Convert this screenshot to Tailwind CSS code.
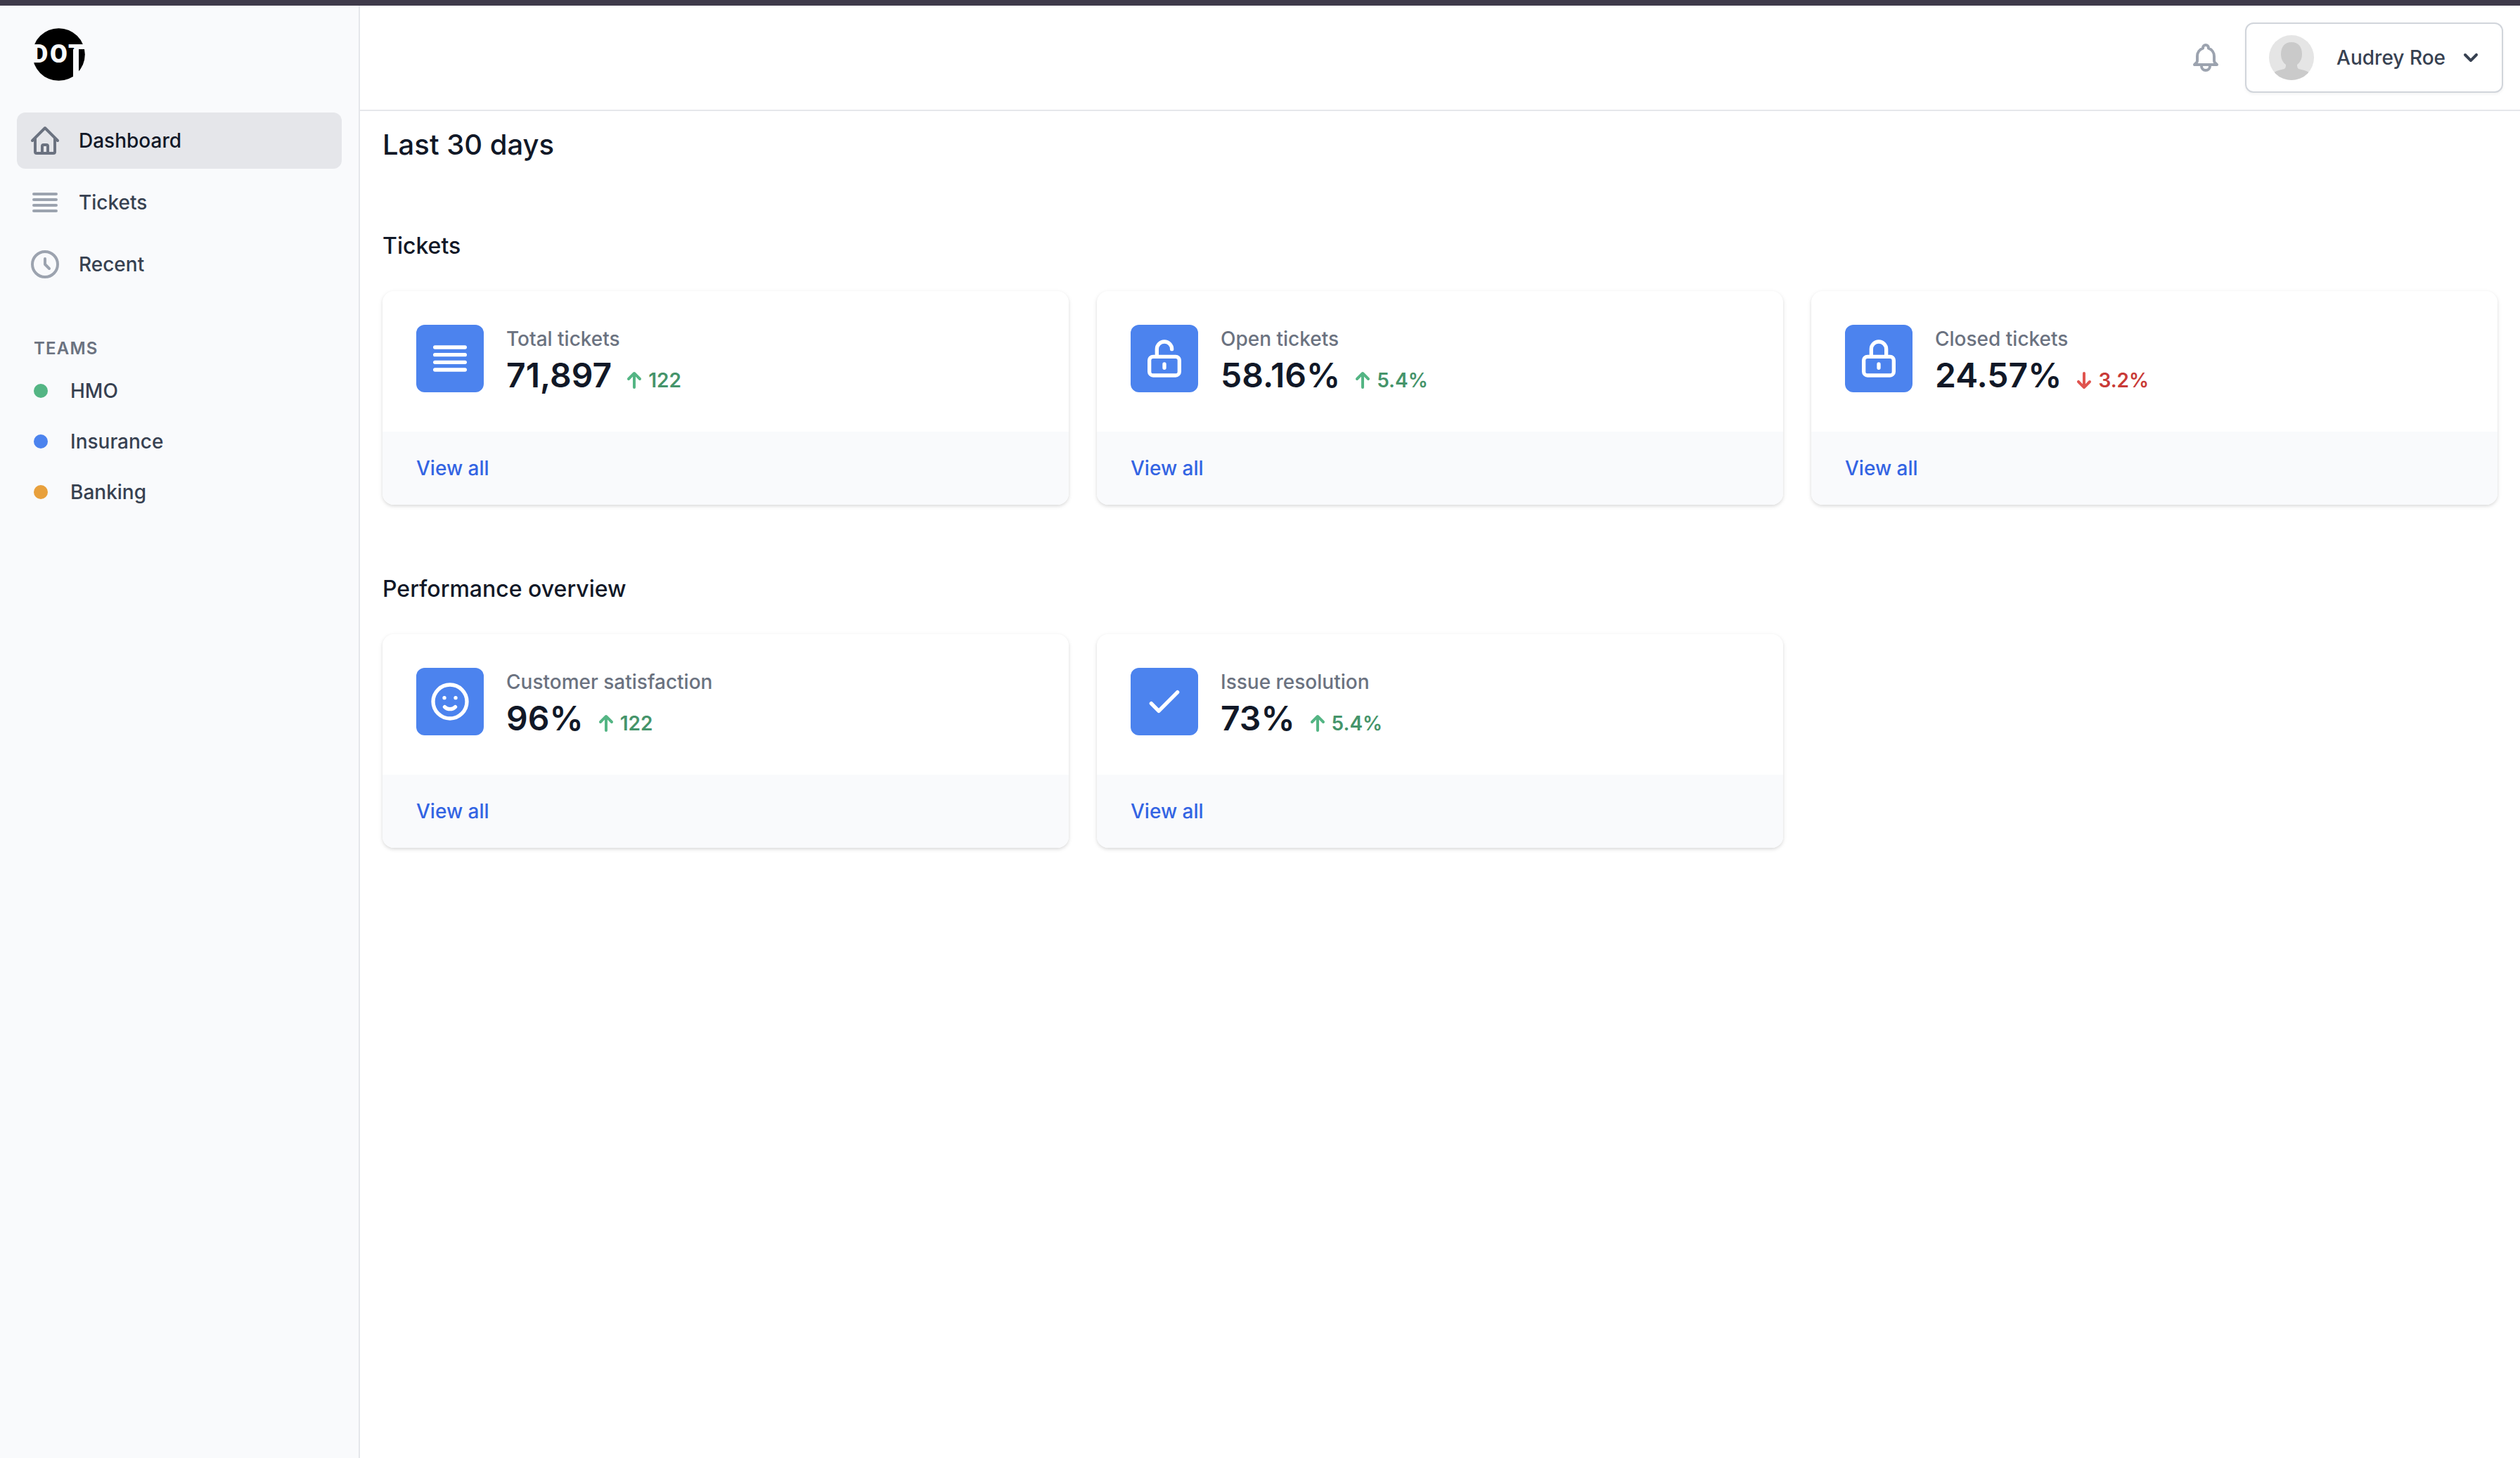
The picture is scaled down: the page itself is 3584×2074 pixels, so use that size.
<!DOCTYPE html>
<html lang="en">
<head>
<meta charset="utf-8">
<meta name="viewport" content="width=device-width, initial-scale=1">
<title>Dashboard</title>
<script src="https://cdn.jsdelivr.net/npm/@tailwindcss/browser@4"></script>
</head>
<body class="flex min-h-screen flex-col border-t-8 border-[#3f3a4a] bg-white font-['Inter',sans-serif] text-[28px] leading-10 font-medium text-[#111827]">
<div class="flex grow">
  <aside class="w-[512px] shrink-0 border-r-2 border-[#e5e7eb] bg-[#f9fafc] px-6 pt-8">
    <a href="#" aria-label="DOT home" class="block pl-[21px]">
      <svg class="h-[76px] w-[76px]" viewBox="0 0 76 76" aria-hidden="true">
        <circle cx="38.5" cy="37.5" r="37.3" fill="#000"/>
        <text y="49" x="0 26 52" font-family="Roboto, sans-serif" font-weight="900" font-size="36" fill="#f9fafc">DOT</text>
        <path d="M0 23h4v26H0zM66 23h10v7H66zM59 30h8v46h-8z" fill="#f9fafc"/>
      </svg>
    </a>
    <nav class="mt-11 flex flex-col gap-2 text-[#374151]">
      <a href="#" aria-current="page" class="flex items-center gap-6 rounded-xl bg-[#e5e6ea] px-4 py-4 text-[#111827]">
        <svg class="size-12 text-[#6b7280]" fill="none" viewBox="0 0 24 24" stroke="currentColor" stroke-width="2" stroke-linecap="round" stroke-linejoin="round" aria-hidden="true"><path d="M3 12l2-2m0 0l7-7 7 7M5 10v10a1 1 0 001 1h3m10-11l2 2m-2-2v10a1 1 0 01-1 1h-3m-6 0a1 1 0 001-1v-4a1 1 0 011-1h2a1 1 0 011 1v4a1 1 0 001 1m-6 0h6"/></svg>
        Dashboard
      </a>
      <a href="#" class="flex items-center gap-6 rounded-xl px-4 py-4">
        <svg class="size-12 text-[#9ca3af]" fill="none" viewBox="0 0 24 24" stroke="currentColor" stroke-width="2" stroke-linecap="round" stroke-linejoin="round" aria-hidden="true"><path d="M4 6h16M4 10h16M4 14h16M4 18h16"/></svg>
        Tickets
      </a>
      <a href="#" class="flex items-center gap-6 rounded-xl px-4 py-4">
        <svg class="size-12 text-[#9ca3af]" fill="none" viewBox="0 0 24 24" stroke="currentColor" stroke-width="2" stroke-linecap="round" stroke-linejoin="round" aria-hidden="true"><path d="M12 8v4l3 3m6-3a9 9 0 11-18 0 9 9 0 0118 0z"/></svg>
        Recent
      </a>
    </nav>
    <h3 id="teams" class="mt-16 px-6 text-2xl leading-8 font-semibold tracking-wider text-[#6b7280] uppercase">Teams</h3>
    <div role="group" aria-labelledby="teams" class="mt-2 flex flex-col text-[#374151]">
      <a href="#" class="flex items-center gap-8 px-6 py-4"><span class="size-5 rounded-full bg-[#54b584]"></span>HMO</a>
      <a href="#" class="flex items-center gap-8 px-6 py-4"><span class="size-5 rounded-full bg-[#4c83ee]"></span>Insurance</a>
      <a href="#" class="flex items-center gap-8 px-6 py-4"><span class="size-5 rounded-full bg-[#e8a03c]"></span>Banking</a>
    </div>
  </aside>

  <div class="min-w-0 grow">
    <header class="flex items-center justify-end gap-8 border-b-2 border-[#e5e7eb] px-6 py-6">
      <button type="button" aria-label="View notifications" class="text-[#9ca3af]">
        <svg class="size-12" fill="none" viewBox="0 0 24 24" stroke="currentColor" stroke-width="2" stroke-linecap="round" stroke-linejoin="round" aria-hidden="true"><path d="M15 17h5l-1.405-1.405A2.032 2.032 0 0118 14.158V11a6.002 6.002 0 00-4-5.659V5a2 2 0 10-4 0v.341C7.67 6.165 6 8.388 6 11v3.159c0 .538-.214 1.055-.595 1.436L4 17h5m6 0v1a3 3 0 11-6 0v-1m6 0H9"/></svg>
      </button>
      <button type="button" aria-haspopup="menu" class="flex items-center rounded-xl border-2 border-[#d1d5db] bg-white py-4 pr-6 pl-8 text-[#374151] shadow-[0_2px_4px_rgba(0,0,0,0.05)]">
        <svg class="size-16 rounded-full" viewBox="0 0 64 64" aria-hidden="true">
          <path fill="#e5e5e5" d="M0 0h64v64H0z"/>
          <path fill="#cacaca" d="M32 10c10 0 15 7 15 17 0 7-3 12-7 15 0 5 1 6 6 7 6 1 10 3 13 6v9H5v-9c3-3 7-5 13-6 5-1 6-2 6-7-4-3-7-8-7-15 0-10 5-17 15-17z"/>
        </svg>
        <span class="ml-8">Audrey Roe</span>
        <svg class="ml-4 size-10" viewBox="0 0 20 20" fill="currentColor" aria-hidden="true"><path fill-rule="evenodd" clip-rule="evenodd" d="M5.293 7.293a1 1 0 011.414 0L10 10.586l3.293-3.293a1 1 0 111.414 1.414l-4 4a1 1 0 01-1.414 0l-4-4a1 1 0 010-1.414z"/></svg>
      </button>
    </header>

    <main class="px-8 pt-4">
      <h1 class="text-[40px] leading-16">Last 30 days</h1>

      <section class="mt-22">
        <h2 class="text-[32px] leading-12">Tickets</h2>
        <div class="mt-10 grid grid-cols-3 gap-10">
          <article class="overflow-hidden rounded-2xl shadow-[0_2px_6px_rgba(0,0,0,0.1),0_2px_4px_rgba(0,0,0,0.06)]">
            <div class="flex gap-8 px-12 pt-12 pb-12">
              <div class="grid size-24 shrink-0 place-items-center rounded-xl bg-[#4c83ee] text-white">
                <svg class="size-16" fill="none" viewBox="0 0 24 24" stroke="currentColor" stroke-width="2" stroke-linecap="round" stroke-linejoin="round" aria-hidden="true"><path d="M4 6h16M4 10h16M4 14h16M4 18h16"/></svg>
              </div>
              <div>
                <h3 class="text-[#6b7280]">Total tickets</h3>
                <p class="flex items-baseline gap-3">
                  <span class="text-5xl leading-16 font-semibold">71,897</span>
                  <span class="flex items-baseline font-semibold text-[#45946a]">
                    <svg class="size-10 self-center text-[#54b584]" viewBox="0 0 20 20" fill="currentColor" role="img" aria-label="Increased by"><path fill-rule="evenodd" clip-rule="evenodd" d="M5.293 9.707a1 1 0 010-1.414l4-4a1 1 0 011.414 0l4 4a1 1 0 01-1.414 1.414L11 7.414V15a1 1 0 11-2 0V7.414L6.707 9.707a1 1 0 01-1.414 0z"/></svg>122</span>
                </p>
              </div>
            </div>
            <div class="bg-[#f9fafc] px-12 py-8"><a href="#" class="block text-[#3364e3]">View all</a></div>
          </article>

          <article class="overflow-hidden rounded-2xl shadow-[0_2px_6px_rgba(0,0,0,0.1),0_2px_4px_rgba(0,0,0,0.06)]">
            <div class="flex gap-8 px-12 pt-12 pb-12">
              <div class="grid size-24 shrink-0 place-items-center rounded-xl bg-[#4c83ee] text-white">
                <svg class="size-16" fill="none" viewBox="0 0 24 24" stroke="currentColor" stroke-width="2" stroke-linecap="round" stroke-linejoin="round" aria-hidden="true"><path d="M8 11V7a4 4 0 118 0m-4 8v2m-6 4h12a2 2 0 002-2v-6a2 2 0 00-2-2H6a2 2 0 00-2 2v6a2 2 0 002 2z"/></svg>
              </div>
              <div>
                <h3 class="text-[#6b7280]">Open tickets</h3>
                <p class="flex items-baseline gap-3">
                  <span class="text-5xl leading-16 font-semibold">58.16%</span>
                  <span class="flex items-baseline font-semibold text-[#45946a]">
                    <svg class="size-10 self-center text-[#54b584]" viewBox="0 0 20 20" fill="currentColor" role="img" aria-label="Increased by"><path fill-rule="evenodd" clip-rule="evenodd" d="M5.293 9.707a1 1 0 010-1.414l4-4a1 1 0 011.414 0l4 4a1 1 0 01-1.414 1.414L11 7.414V15a1 1 0 11-2 0V7.414L6.707 9.707a1 1 0 01-1.414 0z"/></svg>5.4%</span>
                </p>
              </div>
            </div>
            <div class="bg-[#f9fafc] px-12 py-8"><a href="#" class="block text-[#3364e3]">View all</a></div>
          </article>

          <article class="overflow-hidden rounded-2xl shadow-[0_2px_6px_rgba(0,0,0,0.1),0_2px_4px_rgba(0,0,0,0.06)]">
            <div class="flex gap-8 px-12 pt-12 pb-12">
              <div class="grid size-24 shrink-0 place-items-center rounded-xl bg-[#4c83ee] text-white">
                <svg class="size-16" fill="none" viewBox="0 0 24 24" stroke="currentColor" stroke-width="2" stroke-linecap="round" stroke-linejoin="round" aria-hidden="true"><path d="M12 15v2m-6 4h12a2 2 0 002-2v-6a2 2 0 00-2-2H6a2 2 0 00-2 2v6a2 2 0 002 2zm10-10V7a4 4 0 00-8 0v4h8z"/></svg>
              </div>
              <div>
                <h3 class="text-[#6b7280]">Closed tickets</h3>
                <p class="flex items-baseline gap-3">
                  <span class="text-5xl leading-16 font-semibold">24.57%</span>
                  <span class="flex items-baseline font-semibold text-[#c93a37]">
                    <svg class="size-10 self-center text-[#e0544f]" viewBox="0 0 20 20" fill="currentColor" role="img" aria-label="Decreased by"><path fill-rule="evenodd" clip-rule="evenodd" d="M14.707 10.293a1 1 0 010 1.414l-4 4a1 1 0 01-1.414 0l-4-4a1 1 0 111.414-1.414L9 12.586V5a1 1 0 012 0v7.586l2.293-2.293a1 1 0 011.414 0z"/></svg>3.2%</span>
                </p>
              </div>
            </div>
            <div class="bg-[#f9fafc] px-12 py-8"><a href="#" class="block text-[#3364e3]">View all</a></div>
          </article>
        </div>
      </section>

      <section class="mt-24">
        <h2 class="text-[32px] leading-12">Performance overview</h2>
        <div class="mt-10 grid grid-cols-3 gap-10">
          <article class="overflow-hidden rounded-2xl shadow-[0_2px_6px_rgba(0,0,0,0.1),0_2px_4px_rgba(0,0,0,0.06)]">
            <div class="flex gap-8 px-12 pt-12 pb-12">
              <div class="grid size-24 shrink-0 place-items-center rounded-xl bg-[#4c83ee] text-white">
                <svg class="size-16" fill="none" viewBox="0 0 24 24" stroke="currentColor" stroke-width="2" stroke-linecap="round" stroke-linejoin="round" aria-hidden="true"><path d="M14.828 14.828a4 4 0 01-5.656 0M9 10h.01M15 10h.01M21 12a9 9 0 11-18 0 9 9 0 0118 0z"/></svg>
              </div>
              <div>
                <h3 class="text-[#6b7280]">Customer satisfaction</h3>
                <p class="flex items-baseline gap-3">
                  <span class="text-5xl leading-16 font-semibold">96%</span>
                  <span class="flex items-baseline font-semibold text-[#45946a]">
                    <svg class="size-10 self-center text-[#54b584]" viewBox="0 0 20 20" fill="currentColor" role="img" aria-label="Increased by"><path fill-rule="evenodd" clip-rule="evenodd" d="M5.293 9.707a1 1 0 010-1.414l4-4a1 1 0 011.414 0l4 4a1 1 0 01-1.414 1.414L11 7.414V15a1 1 0 11-2 0V7.414L6.707 9.707a1 1 0 01-1.414 0z"/></svg>122</span>
                </p>
              </div>
            </div>
            <div class="bg-[#f9fafc] px-12 py-8"><a href="#" class="block text-[#3364e3]">View all</a></div>
          </article>

          <article class="overflow-hidden rounded-2xl shadow-[0_2px_6px_rgba(0,0,0,0.1),0_2px_4px_rgba(0,0,0,0.06)]">
            <div class="flex gap-8 px-12 pt-12 pb-12">
              <div class="grid size-24 shrink-0 place-items-center rounded-xl bg-[#4c83ee] text-white">
                <svg class="size-16" fill="none" viewBox="0 0 24 24" stroke="currentColor" stroke-width="2" stroke-linecap="round" stroke-linejoin="round" aria-hidden="true"><path d="M5 13l4 4L19 7"/></svg>
              </div>
              <div>
                <h3 class="text-[#6b7280]">Issue resolution</h3>
                <p class="flex items-baseline gap-3">
                  <span class="text-5xl leading-16 font-semibold">73%</span>
                  <span class="flex items-baseline font-semibold text-[#45946a]">
                    <svg class="size-10 self-center text-[#54b584]" viewBox="0 0 20 20" fill="currentColor" role="img" aria-label="Increased by"><path fill-rule="evenodd" clip-rule="evenodd" d="M5.293 9.707a1 1 0 010-1.414l4-4a1 1 0 011.414 0l4 4a1 1 0 01-1.414 1.414L11 7.414V15a1 1 0 11-2 0V7.414L6.707 9.707a1 1 0 01-1.414 0z"/></svg>5.4%</span>
                </p>
              </div>
            </div>
            <div class="bg-[#f9fafc] px-12 py-8"><a href="#" class="block text-[#3364e3]">View all</a></div>
          </article>
        </div>
      </section>
    </main>
  </div>
</div>
</body>
</html>
